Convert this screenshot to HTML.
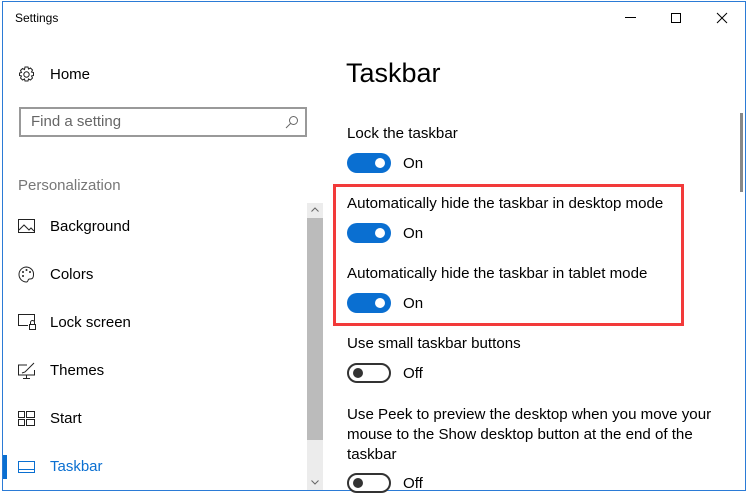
<!DOCTYPE html>
<html><head><style>
*{margin:0;padding:0;box-sizing:border-box}
body{width:748px;height:492px;background:#fff;font-family:"Liberation Sans",sans-serif;position:relative;overflow:hidden;color:#000}
.a{position:absolute;white-space:nowrap}
.win{position:absolute;left:2px;top:1px;width:744px;height:490px;border:1px solid #2b7bd6}
.nav{font-size:15px;left:50px}
.ic{position:absolute;left:18px}
.t{font-size:15.1px;left:347px}
.tg{position:absolute;left:347px;width:44px;height:20px;border-radius:10px;background:#0a6fd1}
.tg::after{content:"";position:absolute;right:6px;top:5px;width:10px;height:10px;border-radius:50%;background:#fff}
.off{background:#fff;border:2px solid #333}
.off::after{left:4px;top:3px;right:auto;background:#333}
.st{font-size:15.1px;left:403px}
</style></head><body>
<div class="win"></div>
<div class="a" style="left:15px;top:11px;font-size:12px">Settings</div>
<div class="a" style="left:625px;top:17px;width:11px;height:1px;background:#000"></div>
<div class="a" style="left:671px;top:13px;width:10px;height:10px;border:1px solid #000"></div>
<svg class="a" style="left:716px;top:12px" width="12" height="12"><path d="M1 1L11 11M11 1L1 11" stroke="#000" stroke-width="1"/></svg>
<svg class="ic" style="top:66px" width="17" height="17" viewBox="0 0 17 17"><circle cx="8.5" cy="8.5" r="2.7" fill="none" stroke="#222"/><path d="M7 1h3l.5 2 2-1 2 2-1 2 2 .5v3l-2 .5 1 2-2 2-2-1-.5 2H7l-.5-2-2 1-2-2 1-2-2-.5V7l2-.5-1-2 2-2 2 1z" fill="none" stroke="#222"/></svg>
<div class="a nav" style="top:66px">Home</div>
<div class="a" style="left:19px;top:107px;width:288px;height:30px;border:2px solid #999"></div>
<div class="a" style="left:31px;top:113px;font-size:15px;color:#666">Find a setting</div>
<svg class="a" style="left:285px;top:115px" width="14" height="14"><circle cx="8.5" cy="5.5" r="4" fill="none" stroke="#666"/><path d="M5.5 8.5L1 13" stroke="#666"/></svg>
<div class="a" style="left:18px;top:177px;font-size:15px;color:#777">Personalization</div>
<svg class="ic" style="top:219px" width="17" height="15"><rect x=".5" y=".5" width="16" height="13" fill="none" stroke="#222"/><path d="M1 11l5-5 5 5 2-2 3 3" fill="none" stroke="#222"/></svg>
<div class="a nav" style="top:218px">Background</div>
<svg class="ic" style="top:266px" width="17" height="17"><path d="M8.5 1a7.5 7.5 0 1 0 0 15c2 0 1-3 3-3s4 0 4-4.5A7.5 7 0 0 0 8.5 1z" fill="none" stroke="#222"/><circle cx="5" cy="6" r="1" fill="#222"/><circle cx="8.5" cy="4" r="1" fill="#222"/><circle cx="12" cy="6" r="1" fill="#222"/><circle cx="5" cy="10" r="1" fill="#222"/></svg>
<div class="a nav" style="top:266px">Colors</div>
<svg class="ic" style="top:314px" width="18" height="16"><path d="M10 11.5H.5V.5h16v7" fill="none" stroke="#222"/><rect x="11.5" y="10.5" width="6" height="5" fill="none" stroke="#222"/><path d="M12.5 10.5v-2a2 2 0 0 1 4 0v2" fill="none" stroke="#222"/></svg>
<div class="a nav" style="top:314px">Lock screen</div>
<svg class="ic" style="top:362px" width="18" height="17"><path d="M9 3H.5v10h16V8M8.5 13v3M5 16.5h7M4 11l3-1 9-9" fill="none" stroke="#222"/></svg>
<div class="a nav" style="top:362px">Themes</div>
<svg class="ic" style="top:411px" width="17" height="15"><rect x=".5" y=".5" width="6" height="6" fill="none" stroke="#222"/><rect x="8.5" y=".5" width="8" height="6" fill="none" stroke="#222"/><rect x=".5" y="8.5" width="6" height="6" fill="none" stroke="#222"/><rect x="8.5" y="8.5" width="8" height="6" fill="none" stroke="#222"/></svg>
<div class="a nav" style="top:410px">Start</div>
<div class="a" style="left:3px;top:455px;width:4px;height:24px;background:#0a6fd1"></div>
<svg class="ic" style="top:461px" width="17" height="12"><rect x=".5" y=".5" width="16" height="11" fill="none" stroke="#0a6fd1"/><path d="M1 8.5h15" stroke="#0a6fd1"/></svg>
<div class="a nav" style="top:458px;color:#0a6fd1">Taskbar</div>
<div class="a" style="left:307px;top:203px;width:16px;height:287px;background:#ececec"></div>
<div class="a" style="left:307px;top:218px;width:16px;height:222px;background:#bbb"></div>
<svg class="a" style="left:311px;top:207px" width="8" height="5"><path d="M.5 4.5L4 1l3.5 3.5" fill="none" stroke="#666"/></svg>
<svg class="a" style="left:311px;top:480px" width="8" height="5"><path d="M.5 .5L4 4l3.5-3.5" fill="none" stroke="#666"/></svg>
<div class="a" style="left:740px;top:113px;width:3px;height:79px;background:#888"></div>
<div class="a" style="left:346px;top:58px;font-size:27px">Taskbar</div>
<div class="a t" style="top:125px">Lock the taskbar</div>
<div class="tg" style="top:153px"></div><div class="a st" style="top:155px">On</div>
<div class="a" style="left:333px;top:184px;width:351px;height:142px;border:3px solid #f23a3a"></div>
<div class="a t" style="top:195px">Automatically hide the taskbar in desktop mode</div>
<div class="tg" style="top:223px"></div><div class="a st" style="top:225px">On</div>
<div class="a t" style="top:265px">Automatically hide the taskbar in tablet mode</div>
<div class="tg" style="top:293px"></div><div class="a st" style="top:295px">On</div>
<div class="a t" style="top:335px">Use small taskbar buttons</div>
<div class="tg off" style="top:363px"></div><div class="a st" style="top:365px">Off</div>
<div class="a t" style="top:405px;line-height:20px">Use Peek to preview the desktop when you move your<br>mouse to the Show desktop button at the end of the<br>taskbar</div>
<div class="tg off" style="top:473px"></div><div class="a st" style="top:475px">Off</div>
</body></html>
